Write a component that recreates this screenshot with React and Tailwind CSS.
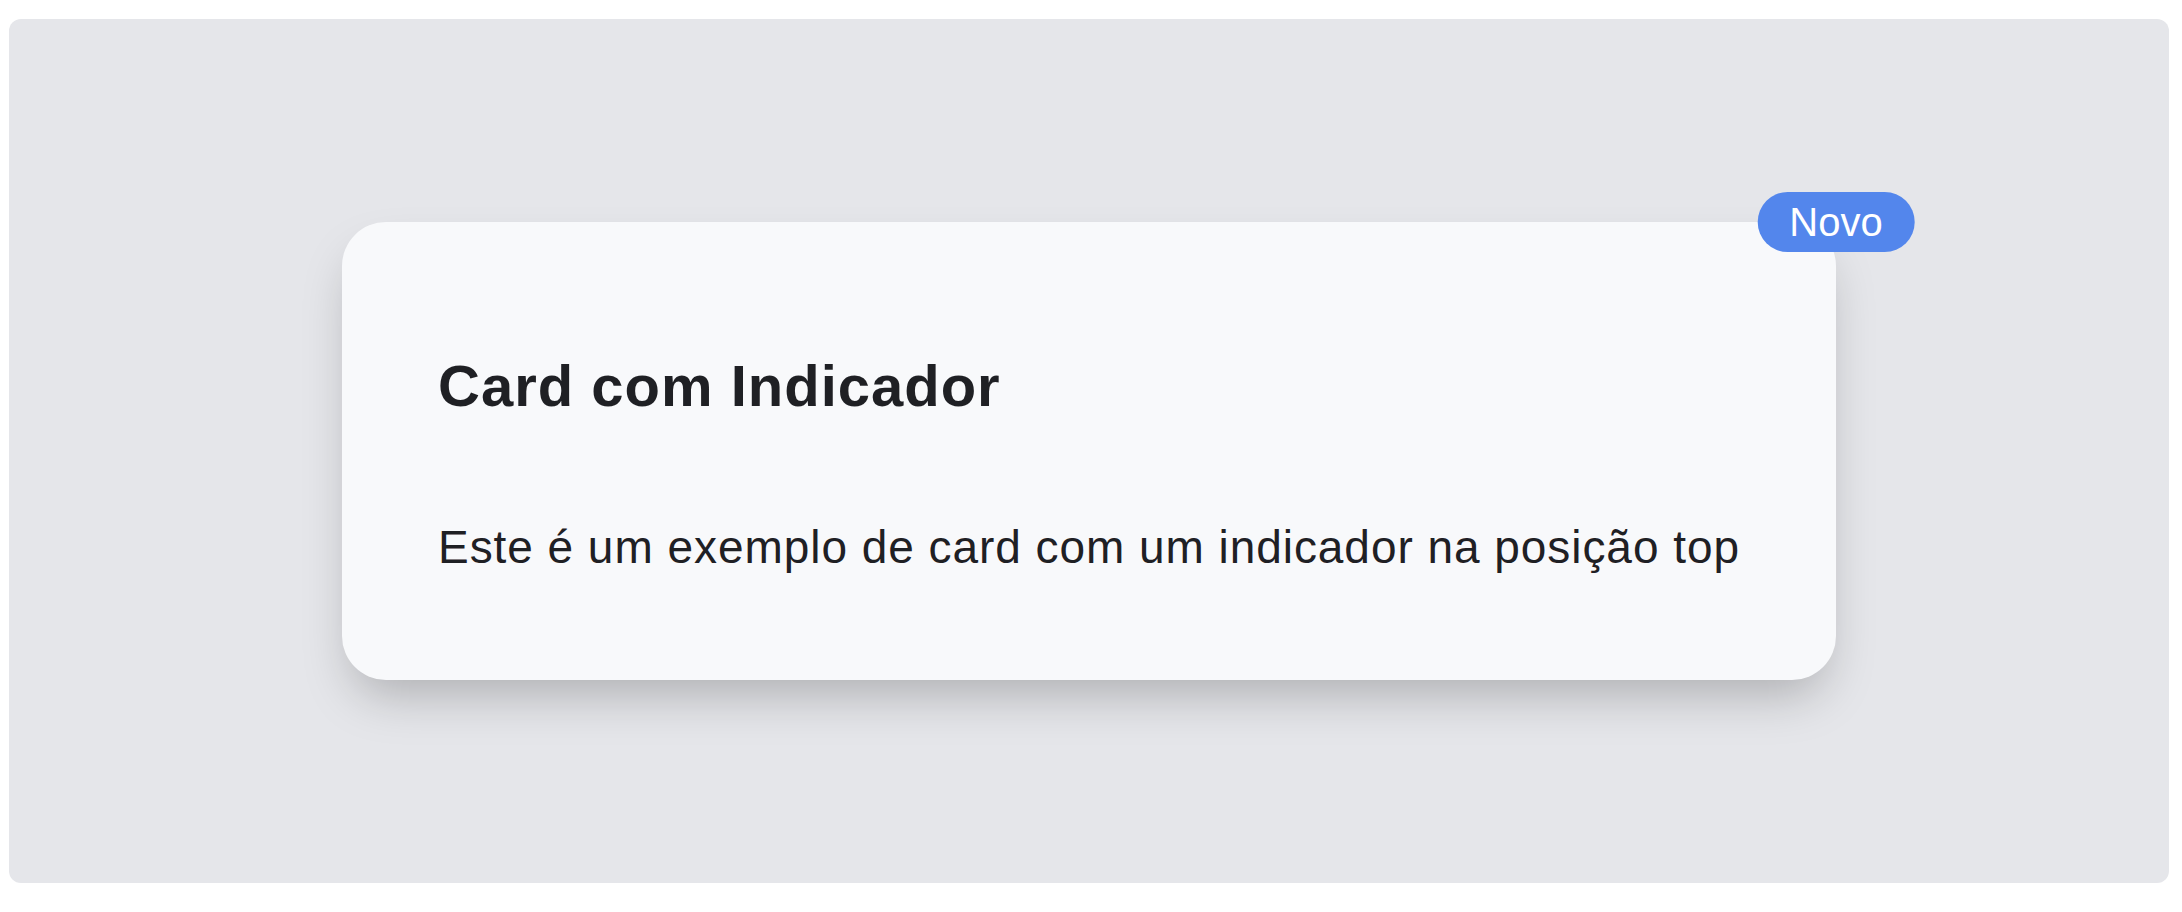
import React from 'react';

const font = { fontFamily: '"Liberation Sans", Arial, Helvetica, sans-serif' };

const IndicatorCard = ({ title, text, badge }) => {
  return (
    <div className="relative w-fit rounded-[44px] bg-[#f8f9fb] px-24 pt-[135px] pb-[110px] shadow-2xl">
      <h2 className="text-[58px] font-bold leading-none tracking-[1px] text-[#1f2024]">{title}</h2>
      <p className="mt-[109px] text-[46px] leading-none tracking-[0.95px] text-[#1f2024]">{text}</p>

      {/* Indicator */}
      <span className="absolute top-0 right-0 translate-x-1/2 -translate-y-1/2 rounded-full bg-[#5386ec] px-8 py-2.5 text-[40px] leading-none text-white">
        {badge}
      </span>
    </div>
  );
};

export default function App() {
  return (
    <div className="bg-white pt-[19px] pb-[29px] pl-[9px] pr-[13px]" style={font}>
      <div className="flex h-[864px] items-center justify-center rounded-xl bg-[#e5e6ea]">
        <IndicatorCard
          title="Card com Indicador"
          text="Este é um exemplo de card com um indicador na posição top"
          badge="Novo"
        />
      </div>
    </div>
  );
}
